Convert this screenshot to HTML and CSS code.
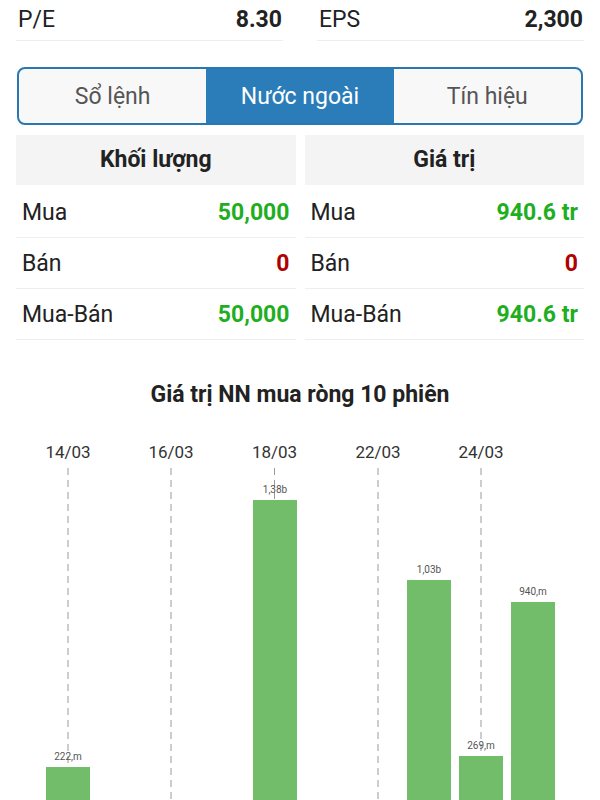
FILE: index.html
```html
<!DOCTYPE html>
<html lang="vi">
<head>
    <meta charset="UTF-8">
    <meta name="viewport" content="width=device-width, initial-scale=1.0">
    <title>Nước ngoài</title>
    <link rel="stylesheet" href="styles.css">
</head>
<body>
    <div class="stats">
        <div class="stat"><span>P/E</span><b>8.30</b></div>
        <div class="stat"><span>EPS</span><b>2,300</b></div>
    </div>

    <div class="tabs">
        <div class="tab">Sổ lệnh</div>
        <div class="tab active">Nước ngoài</div>
        <div class="tab">Tín hiệu</div>
    </div>

    <div class="tables">
        <div class="table">
            <div class="table-head">Khối lượng</div>
            <div class="row"><span>Mua</span><b class="up">50,000</b></div>
            <div class="row"><span>Bán</span><b class="down">0</b></div>
            <div class="row"><span>Mua-Bán</span><b class="up">50,000</b></div>
        </div>
        <div class="table">
            <div class="table-head">Giá trị</div>
            <div class="row"><span>Mua</span><b class="up">940.6 tr</b></div>
            <div class="row"><span>Bán</span><b class="down">0</b></div>
            <div class="row"><span>Mua-Bán</span><b class="up">940.6 tr</b></div>
        </div>
    </div>

    <div class="chart">
        <h2 class="chart-title">Giá trị NN mua ròng 10 phiên</h2>
        <svg class="chart-svg" width="600" height="400" viewBox="0 0 600 400">
            <!-- date grid -->
            <g class="grid">
                <line x1="68" y1="38" x2="68" y2="400"></line>
                <line x1="171" y1="38" x2="171" y2="400"></line>
                <line x1="274.5" y1="38" x2="274.5" y2="400"></line>
                <line x1="378" y1="38" x2="378" y2="400"></line>
                <line x1="481" y1="38" x2="481" y2="400"></line>
            </g>
            <g class="dates">
                <text x="68" y="28">14/03</text>
                <text x="171" y="28">16/03</text>
                <text x="274.5" y="28">18/03</text>
                <text x="378" y="28">22/03</text>
                <text x="481" y="28">24/03</text>
            </g>
            <!-- bars, baseline at y=388 -->
            <g class="bars">
                <rect x="46" y="337" width="44" height="51"></rect>
                <rect x="253" y="70" width="44" height="318"></rect>
                <rect x="407" y="150" width="44" height="238"></rect>
                <rect x="459" y="326" width="44" height="62"></rect>
                <rect x="511" y="172" width="44" height="216"></rect>
            </g>
            <g class="values">
                <text x="68" y="330">222,m</text>
                <text x="275" y="63">1,38b</text>
                <text x="429" y="143">1,03b</text>
                <text x="481" y="319">269,m</text>
                <text x="533" y="165">940,m</text>
            </g>
        </svg>
    </div>
</body>
</html>
```
FILE: styles.css
```css
body {
    margin: 0;
    font-family: Roboto, "Noto Sans", sans-serif;
    color: #222;
    background-color: #fff;
}

.stats {
    display: grid;
    grid-template-columns: 1fr 1fr;
    gap: 34px;
    padding: 0 16px;
}

.stat {
    display: flex;
    justify-content: space-between;
    align-items: center;
    height: 38px;
    padding: 0 1px 2px 2px;
    font-size: 23px;
    border-bottom: 1px solid #eee;
}

.stat b {
    font-weight: bold;
}

.tabs {
    display: flex;
    margin: 26px 17px 0;
    border: 2px solid #2a78b0;
    border-radius: 8px;
    overflow: hidden;
    background-color: #f8f8f8;
}

.tab {
    flex: 1;
    height: 54px;
    line-height: 56px;
    text-align: center;
    font-size: 23px;
    color: #555;
}

.tab.active {
    background-color: #2a7db8;
    color: #fff;
}

.tables {
    display: grid;
    grid-template-columns: 1fr 1fr;
    gap: 9px;
    margin: 10px 16px 0;
}

.table-head {
    height: 50px;
    line-height: 50px;
    margin-bottom: 2px;
    background-color: #f4f4f4;
    text-align: center;
    font-size: 23px;
    font-weight: bold;
}

.row {
    display: flex;
    justify-content: space-between;
    align-items: center;
    height: 50px;
    padding: 0 6px;
    font-size: 23px;
    border-bottom: 1px solid #eee;
}

.up {
    color: #1fae1f;
}

.down {
    color: #b00000;
}

.chart {
    margin-top: 42px;
}

.chart-title {
    margin: 0 0 22px;
    text-align: center;
    font-size: 23px;
    line-height: 26px;
    font-weight: bold;
}

.chart-svg {
    display: block;
}

.grid line {
    stroke: #9a9a9a;
    stroke-width: 1;
    stroke-dasharray: 7 5;
}

.dates text {
    font-size: 17px;
    fill: #333;
    text-anchor: middle;
}

.bars rect {
    fill: #71bd69;
}

.values text {
    font-size: 10px;
    fill: #555;
    text-anchor: middle;
}
```
